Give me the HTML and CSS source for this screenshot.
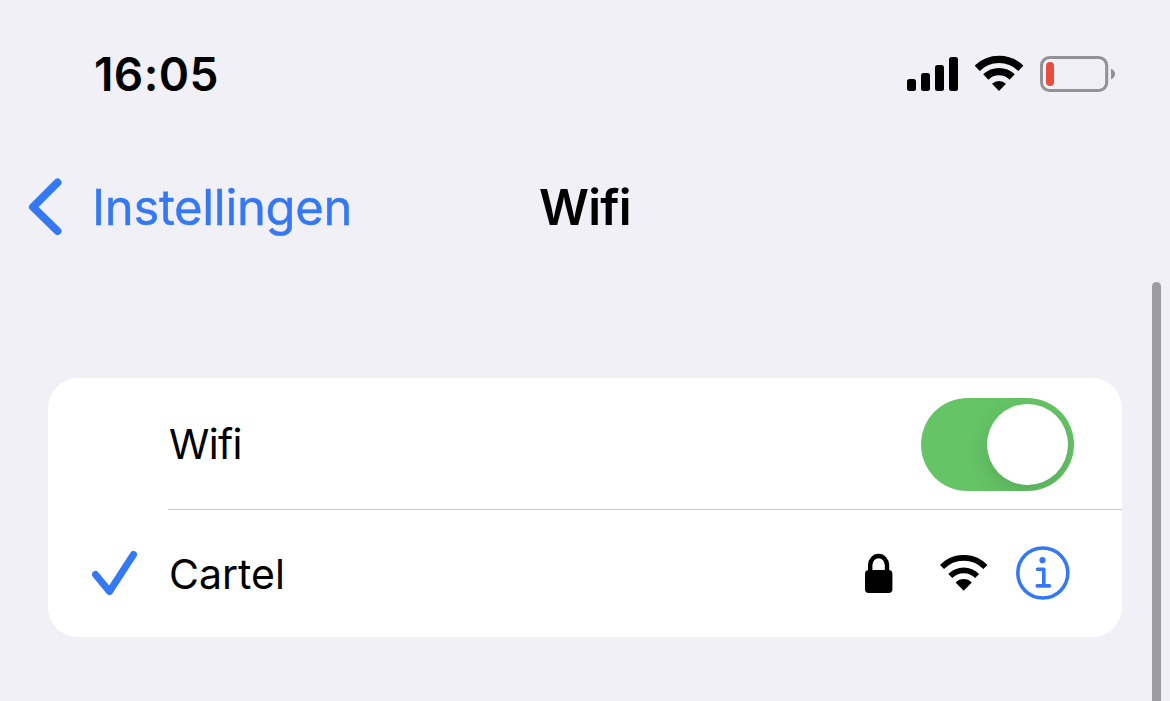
FILE: index.html
```html
<!DOCTYPE html>
<html lang="nl">
<head>
    <meta charset="UTF-8">
    <meta name="viewport" content="width=device-width, initial-scale=1.0">
    <title>Wifi</title>
    <link rel="stylesheet" href="styles.css">
</head>
<body>
    <div class="screen">
        <!-- Status bar -->
        <div class="status-bar">
            <span class="time">16:05</span>
            <div class="status-icons">
                <svg class="signal" viewBox="0 0 51 34">
                    <rect x="0" y="22" width="9" height="12" rx="2.5"/>
                    <rect x="14" y="16" width="9" height="18" rx="2.5"/>
                    <rect x="28" y="8" width="9" height="26" rx="2.5"/>
                    <rect x="42" y="0" width="9" height="34" rx="2.5"/>
                </svg>
                <svg class="wifi" viewBox="0 0 49 36">
                    <path class="arc" d="M2.2 13.3a31.2 31.2 0 0 1 43.6 0M10.8 22a18.8 18.8 0 0 1 26.4 0"/>
                    <path d="M17 28.7a10.8 10.8 0 0 1 14 0L24 36z"/>
                </svg>
                <svg class="battery" viewBox="0 0 75 36">
                    <rect class="battery-case" x="1.5" y="1.5" width="65.2" height="33" rx="8"/>
                    <rect class="battery-level" x="6" y="6" width="8" height="24" rx="3.8"/>
                    <path class="battery-tip" d="M71 12.8c5.4 2 5.4 8.4 0 10.4z"/>
                </svg>
            </div>
        </div>

        <!-- Navigation -->
        <div class="nav-bar">
            <a href="#" class="back">
                <svg viewBox="0 0 34 58">
                    <path d="M29.5 4.5 5 29l24.5 24"/>
                </svg>
                <span>Instellingen</span>
            </a>
            <h1 class="title">Wifi</h1>
        </div>

        <!-- Network list -->
        <div class="card">
            <div class="row">
                <div class="row-body divided">
                    <span class="label tight">Wifi</span>
                    <div class="toggle"><div class="knob"></div></div>
                </div>
            </div>
            <div class="row">
                <div class="row-check">
                    <svg viewBox="0 0 46 46">
                        <path d="M3.5 24.5 17.5 41.5 41.5 4.5"/>
                    </svg>
                </div>
                <div class="row-body">
                    <span class="label">Cartel</span>
                    <div class="network-icons">
                        <svg class="lock" viewBox="0 0 28 40">
                            <path d="M5.2 19v-7a8.4 9 0 0 1 16.8 0V19"/>
                            <rect x="0" y="17" width="27.4" height="23" rx="3.8"/>
                        </svg>
                        <svg class="wifi thin" viewBox="0 0 48 36">
                            <path class="arc" d="M2 12a30.2 30.2 0 0 1 43.4 0M10.3 21a18.6 18.6 0 0 1 26.8 0"/>
                            <path d="M15.6 27.4a11.5 11.5 0 0 1 16.2 0l-8.1 8.4z"/>
                        </svg>
                        <svg class="info" viewBox="0 0 54 54">
                            <circle cx="26.8" cy="27" r="25"/>
                            <path d="M21.5 23.3h6.3v16.5M21.2 39.9h12.3"/>
                            <circle class="info-dot" cx="26.5" cy="14.2" r="3.1"/>
                        </svg>
                    </div>
                </div>
            </div>
        </div>

        <div class="scrollbar"></div>
    </div>
</body>
</html>
```

FILE: styles.css
```css
* {
    margin: 0;
    padding: 0;
    box-sizing: border-box;
}

body {
    font-family: Inter, "Liberation Sans", sans-serif;
    background: #f1f0f6;
    color: #000;
    overflow: hidden;
}

svg {
    display: block;
    flex-shrink: 0;
}

.screen {
    position: relative;
    height: 701px;
    overflow: hidden;
}

/* Status bar */
.status-bar {
    display: flex;
    align-items: center;
    justify-content: space-between;
    height: 148px;
    padding: 0 55px 0 94px;
}

.time {
    font-size: 46px;
    font-weight: 600;
    line-height: 56px;
    letter-spacing: 0.4px;
}

.status-icons {
    display: flex;
    align-items: center;
}

.signal {
    width: 51px;
    height: 34px;
    margin-right: 17px;
}

.wifi {
    width: 49px;
    height: 36px;
}

.status-icons .wifi {
    margin: -2px 16px 0 0;
}

.wifi .arc {
    fill: none;
    stroke: #000;
    stroke-width: 7.4;
}

.battery {
    width: 75px;
    height: 36px;
}

.battery-case {
    fill: none;
    stroke: #929196;
    stroke-width: 3;
}

.battery-level {
    fill: #eb4d3d;
}

.battery-tip {
    fill: #929196;
}

/* Navigation */
.nav-bar {
    display: grid;
    grid-template-columns: 1fr auto 1fr;
    align-items: center;
    height: 118px;
    padding: 0 28px;
}

.back {
    display: flex;
    align-items: center;
    gap: 30px;
    color: #3478f6;
    font-size: 49px;
    line-height: 60px;
    letter-spacing: -0.35px;
    text-decoration: none;
}

.back span {
    padding-top: 2px;
    -webkit-text-stroke: 0.4px #3478f6;
}

.back svg {
    width: 34px;
    height: 58px;
    fill: none;
    stroke: #3478f6;
    stroke-width: 8;
    stroke-linecap: round;
    stroke-linejoin: round;
}

.title {
    padding-top: 2px;
    font-size: 49px;
    font-weight: 600;
    line-height: 60px;
    letter-spacing: -0.8px;
}

/* Network list */
.card {
    margin: 112px 48px 0;
    height: 259px;
    background: #fff;
    border-radius: 30px;
    overflow: hidden;
}

.row {
    display: flex;
    justify-content: flex-end;
}

.row-check {
    width: 120px;
    padding: 40px 0 0 44px;
}

.row-check svg {
    width: 46px;
    height: 46px;
    fill: none;
    stroke: #3478f6;
    stroke-width: 7;
    stroke-linecap: round;
    stroke-linejoin: round;
}

.row-body {
    display: flex;
    align-items: center;
    justify-content: space-between;
    width: 954px;
    height: 127px;
    padding: 0 48px 0 1px;
}

.row-body.divided {
    height: 132px;
    padding-top: 1px;
    border-bottom: 1px solid #c5c5c8;
}

.label {
    font-size: 41px;
    line-height: 50px;
}

.label.tight {
    letter-spacing: -0.7px;
}

.toggle {
    display: flex;
    justify-content: flex-end;
    width: 153px;
    height: 93px;
    padding: 6px;
    background: #65c466;
    border-radius: 47px;
    overflow: hidden;
}

.knob {
    width: 81px;
    height: 81px;
    background: #fff;
    border-radius: 50%;
    box-shadow: 0 8px 22px rgba(0, 0, 0, 0.13);
}

.network-icons {
    display: flex;
    align-items: center;
    margin: 0 4px 2px 0;
}

.lock {
    width: 28px;
    height: 40px;
    margin-right: 47px;
}

.lock path {
    fill: none;
    stroke: #000;
    stroke-width: 4.4;
}

.wifi.thin {
    width: 48px;
    margin-right: 28px;
}

.wifi.thin .arc {
    stroke-width: 5.7;
}

.info {
    width: 54px;
    height: 54px;
    fill: none;
    stroke: #3478f6;
    stroke-width: 3.6;
    stroke-linecap: round;
    stroke-linejoin: round;
}

.info-dot {
    fill: #3478f6;
    stroke: none;
}

.scrollbar {
    position: absolute;
    top: 282px;
    right: 9px;
    width: 9px;
    height: 460px;
    background: #9c9ba0;
    border-radius: 5px;
}
```
